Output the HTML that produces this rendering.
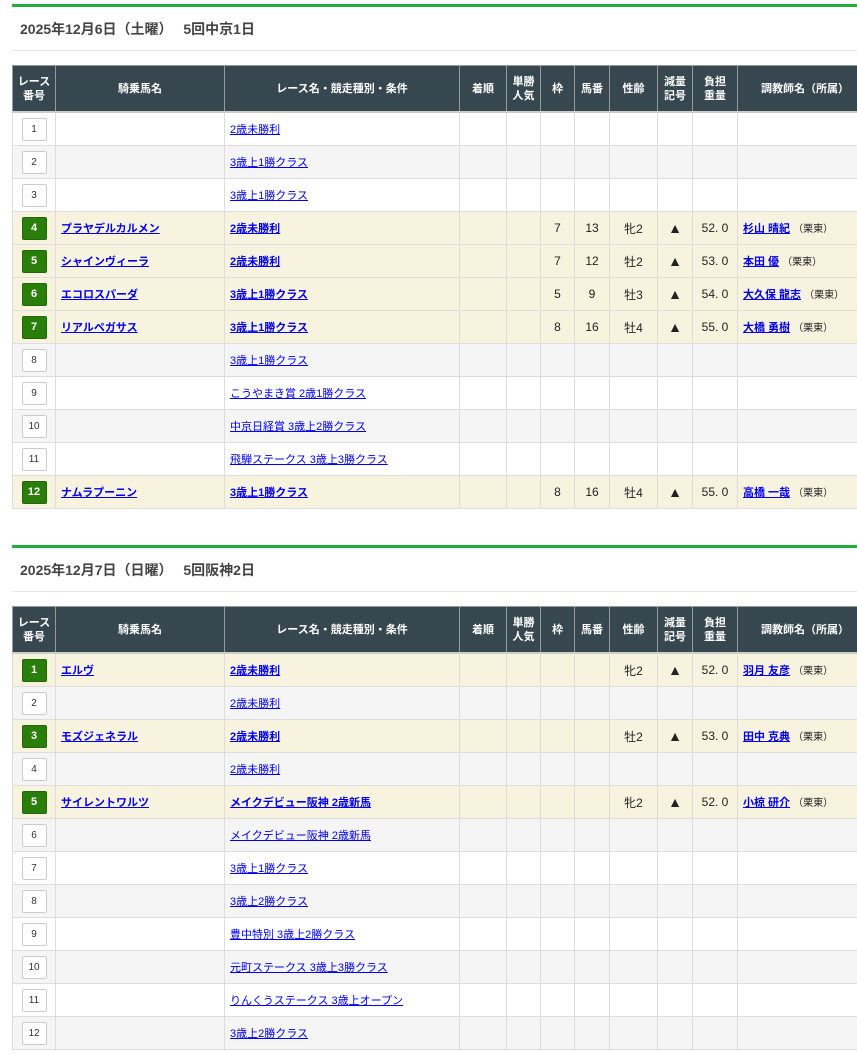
<!DOCTYPE html>
<html><head><meta charset="utf-8"><style>
body{margin:0;background:#fff;font-family:"Liberation Sans","Noto Sans CJK JP",sans-serif;color:#333;width:857px;overflow:hidden}
.sec{margin-left:12px;position:relative}
.bar{height:3px;background:#22ae3c}
.ttl{height:43px;line-height:45px;font-size:14px;font-weight:bold;padding-left:8px;border-bottom:1px solid #e6e6e6;margin-bottom:14px;color:#444}
table{border-collapse:collapse;table-layout:fixed;width:860px;font-size:11px}
th{background:#37474f;color:#fff;font-weight:bold;font-size:11px;height:45px;line-height:14px;border:1px solid #999;border-bottom:2px solid #ccc;padding:0}
td{height:32px;border:1px solid #ddd;padding:0;text-align:center;color:#222;font-size:12px}
tr.g td{background:#f5f5f5}
tr.h td{background:#f8f3df}
td.l{text-align:left;padding-left:5px;font-size:11px}
td.t{font-size:14px}
a{color:#00e;text-decoration:underline}
tr.h a{font-weight:bold}
.b{display:inline-block;width:23px;height:21px;line-height:21px;border:1px solid #ccc;border-radius:2px;background:#fff;font-size:10px;color:#333}
tr.h .b{background:#2a7f0a;border-color:#226808;color:#fff;font-weight:bold;font-size:11px}
.s{font-size:10px}
</style></head><body>
<div class="sec" style="margin-top:4px">
<div class="bar"></div>
<div class="ttl">2025年12月6日（土曜）　 5回中京1日</div>
<table>
<colgroup><col style="width:43px"><col style="width:169px"><col style="width:235px"><col style="width:47px"><col style="width:34px"><col style="width:34px"><col style="width:35px"><col style="width:48px"><col style="width:35px"><col style="width:45px"><col style="width:135px"></colgroup>
<tr><th>レース<br>番号</th><th>騎乗馬名</th><th>レース名・競走種別・条件</th><th>着順</th><th>単勝<br>人気</th><th>枠</th><th>馬番</th><th>性齢</th><th>減量<br>記号</th><th>負担<br>重量</th><th>調教師名（所属）</th></tr>
<tr><td><span class="b">1</span></td><td></td><td class="l"><a>2歳未勝利</a></td><td></td><td></td><td></td><td></td><td></td><td></td><td></td><td></td></tr>
<tr class="g"><td><span class="b">2</span></td><td></td><td class="l"><a>3歳上1勝クラス</a></td><td></td><td></td><td></td><td></td><td></td><td></td><td></td><td></td></tr>
<tr><td><span class="b">3</span></td><td></td><td class="l"><a>3歳上1勝クラス</a></td><td></td><td></td><td></td><td></td><td></td><td></td><td></td><td></td></tr>
<tr class="h"><td><span class="b">4</span></td><td class="l"><a>プラヤデルカルメン</a></td><td class="l"><a>2歳未勝利</a></td><td></td><td></td><td>7</td><td>13</td><td>牝2</td><td class="t">▲</td><td>52. 0</td><td class="l"><a>杉山 晴紀</a> <span class="s">（栗東）</span></td></tr>
<tr class="h"><td><span class="b">5</span></td><td class="l"><a>シャインヴィーラ</a></td><td class="l"><a>2歳未勝利</a></td><td></td><td></td><td>7</td><td>12</td><td>牡2</td><td class="t">▲</td><td>53. 0</td><td class="l"><a>本田 優</a> <span class="s">（栗東）</span></td></tr>
<tr class="h"><td><span class="b">6</span></td><td class="l"><a>エコロスパーダ</a></td><td class="l"><a>3歳上1勝クラス</a></td><td></td><td></td><td>5</td><td>9</td><td>牡3</td><td class="t">▲</td><td>54. 0</td><td class="l"><a>大久保 龍志</a> <span class="s">（栗東）</span></td></tr>
<tr class="h"><td><span class="b">7</span></td><td class="l"><a>リアルペガサス</a></td><td class="l"><a>3歳上1勝クラス</a></td><td></td><td></td><td>8</td><td>16</td><td>牡4</td><td class="t">▲</td><td>55. 0</td><td class="l"><a>大橋 勇樹</a> <span class="s">（栗東）</span></td></tr>
<tr class="g"><td><span class="b">8</span></td><td></td><td class="l"><a>3歳上1勝クラス</a></td><td></td><td></td><td></td><td></td><td></td><td></td><td></td><td></td></tr>
<tr><td><span class="b">9</span></td><td></td><td class="l"><a>こうやまき賞 2歳1勝クラス</a></td><td></td><td></td><td></td><td></td><td></td><td></td><td></td><td></td></tr>
<tr class="g"><td><span class="b">10</span></td><td></td><td class="l"><a>中京日経賞 3歳上2勝クラス</a></td><td></td><td></td><td></td><td></td><td></td><td></td><td></td><td></td></tr>
<tr><td><span class="b">11</span></td><td></td><td class="l"><a>飛騨ステークス 3歳上3勝クラス</a></td><td></td><td></td><td></td><td></td><td></td><td></td><td></td><td></td></tr>
<tr class="h"><td><span class="b">12</span></td><td class="l"><a>ナムラプーニン</a></td><td class="l"><a>3歳上1勝クラス</a></td><td></td><td></td><td>8</td><td>16</td><td>牡4</td><td class="t">▲</td><td>55. 0</td><td class="l"><a>高橋 一哉</a> <span class="s">（栗東）</span></td></tr>
</table>
</div>
<div class="sec" style="margin-top:36px">
<div class="bar"></div>
<div class="ttl">2025年12月7日（日曜）　 5回阪神2日</div>
<table>
<colgroup><col style="width:43px"><col style="width:169px"><col style="width:235px"><col style="width:47px"><col style="width:34px"><col style="width:34px"><col style="width:35px"><col style="width:48px"><col style="width:35px"><col style="width:45px"><col style="width:135px"></colgroup>
<tr><th>レース<br>番号</th><th>騎乗馬名</th><th>レース名・競走種別・条件</th><th>着順</th><th>単勝<br>人気</th><th>枠</th><th>馬番</th><th>性齢</th><th>減量<br>記号</th><th>負担<br>重量</th><th>調教師名（所属）</th></tr>
<tr class="h"><td><span class="b">1</span></td><td class="l"><a>エルヴ</a></td><td class="l"><a>2歳未勝利</a></td><td></td><td></td><td></td><td></td><td>牝2</td><td class="t">▲</td><td>52. 0</td><td class="l"><a>羽月 友彦</a> <span class="s">（栗東）</span></td></tr>
<tr class="g"><td><span class="b">2</span></td><td></td><td class="l"><a>2歳未勝利</a></td><td></td><td></td><td></td><td></td><td></td><td></td><td></td><td></td></tr>
<tr class="h"><td><span class="b">3</span></td><td class="l"><a>モズジェネラル</a></td><td class="l"><a>2歳未勝利</a></td><td></td><td></td><td></td><td></td><td>牡2</td><td class="t">▲</td><td>53. 0</td><td class="l"><a>田中 克典</a> <span class="s">（栗東）</span></td></tr>
<tr class="g"><td><span class="b">4</span></td><td></td><td class="l"><a>2歳未勝利</a></td><td></td><td></td><td></td><td></td><td></td><td></td><td></td><td></td></tr>
<tr class="h"><td><span class="b">5</span></td><td class="l"><a>サイレントワルツ</a></td><td class="l"><a>メイクデビュー阪神 2歳新馬</a></td><td></td><td></td><td></td><td></td><td>牝2</td><td class="t">▲</td><td>52. 0</td><td class="l"><a>小椋 研介</a> <span class="s">（栗東）</span></td></tr>
<tr class="g"><td><span class="b">6</span></td><td></td><td class="l"><a>メイクデビュー阪神 2歳新馬</a></td><td></td><td></td><td></td><td></td><td></td><td></td><td></td><td></td></tr>
<tr><td><span class="b">7</span></td><td></td><td class="l"><a>3歳上1勝クラス</a></td><td></td><td></td><td></td><td></td><td></td><td></td><td></td><td></td></tr>
<tr class="g"><td><span class="b">8</span></td><td></td><td class="l"><a>3歳上2勝クラス</a></td><td></td><td></td><td></td><td></td><td></td><td></td><td></td><td></td></tr>
<tr><td><span class="b">9</span></td><td></td><td class="l"><a>豊中特別 3歳上2勝クラス</a></td><td></td><td></td><td></td><td></td><td></td><td></td><td></td><td></td></tr>
<tr class="g"><td><span class="b">10</span></td><td></td><td class="l"><a>元町ステークス 3歳上3勝クラス</a></td><td></td><td></td><td></td><td></td><td></td><td></td><td></td><td></td></tr>
<tr><td><span class="b">11</span></td><td></td><td class="l"><a>りんくうステークス 3歳上オープン</a></td><td></td><td></td><td></td><td></td><td></td><td></td><td></td><td></td></tr>
<tr class="g"><td><span class="b">12</span></td><td></td><td class="l"><a>3歳上2勝クラス</a></td><td></td><td></td><td></td><td></td><td></td><td></td><td></td><td></td></tr>
</table>
</div>
</body></html>
